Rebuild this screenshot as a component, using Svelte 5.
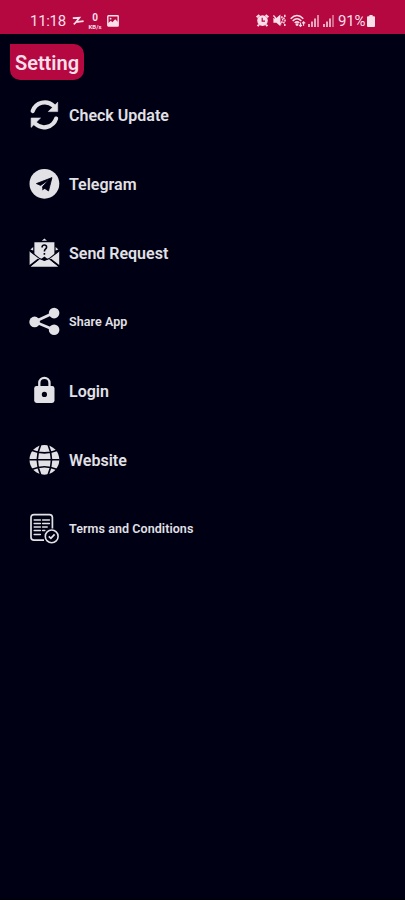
<script>
  const items = [
    { icon: 'refresh', label: 'Check Update' },
    { icon: 'telegram', label: 'Telegram' },
    { icon: 'request', label: 'Send Request' },
    { icon: 'share', label: 'Share App', small: true },
    { icon: 'lock', label: 'Login' },
    { icon: 'globe', label: 'Website' },
    { icon: 'terms', label: 'Terms and Conditions', small: true }
  ];
</script>

<div class="screen">
  <header class="status">
    <div class="left">
      <span class="time">11:18</span>
      <svg class="flash" width="12" height="10" viewBox="0 0 12 10">
        <path d="M.8 2.2 7.4 1.8 4 6.2 11.6 5.2M4.2 6 1.8 8.4" fill="none" stroke="currentColor" stroke-width="1.7" />
      </svg>
      <span class="speed"><b>0</b><i>KB/s</i></span>
      <svg class="photo" width="12" height="12" viewBox="0 0 12 12">
        <rect x=".8" y=".8" width="10.4" height="10.2" rx=".6" fill="none" stroke="currentColor" stroke-width="1.4" />
        <path d="M1 8.2 3.8 5.8 5.4 7.2 8.2 4.2 11 7V11H1Z" fill="currentColor" />
        <circle cx="3.6" cy="3.7" r=".9" fill="currentColor" />
      </svg>
    </div>
    <div class="right">
      <svg class="alarm" width="13" height="13" viewBox="0 0 13 13">
        <circle cx="6.5" cy="6.6" r="5.3" fill="currentColor" />
        <path d="M.6 3.2 3.4.9M12.4 3.2 9.6.9M3 10.6 1.6 12.2M10 10.6 11.4 12.2" stroke="currentColor" stroke-width="2" />
        <path d="M6.2 3.8V7.2H9" fill="none" stroke="#b50841" stroke-width="1.2" />
      </svg>
      <svg class="mute" width="13" height="13" viewBox="0 0 13 13">
        <path d="M.4 4H3.4L7.4.6V12.2L3.4 8.8H.4Z" fill="currentColor" />
        <path d="M0 2.6 1.8 4.6" stroke="#b50841" stroke-width="1" />
        <path d="M.4 1.4 8.2 10.4" stroke="currentColor" stroke-width="1.4" />
        <path d="M8.9 2.2V4.2M9.7 4.8V6.6M8.9 7.2V9M11.8.8V3M10.9 3.4V5M12 5.4V7.4M10.9 7.8V9.6M11.8 10V12" stroke="currentColor" stroke-width="1.5" />
      </svg>
      <svg class="wifi" width="17" height="14" viewBox="0 0 17 14">
        <path d="M.7 4.8Q7-1.6 13.3 4.8M2.7 7Q7 2.6 11.3 7M4.7 9Q7 6.8 9.3 9" fill="none" stroke="currentColor" stroke-width="1.5" />
        <circle cx="7" cy="10.6" r="1.4" fill="currentColor" />
        <path d="M10.5 8.4V12.4M9 10.8 10.5 12.4 12 10.8M13.6 11.8V7.8M12.1 9.4 13.6 7.8 15.2 9.4" fill="none" stroke="currentColor" stroke-width="1.1" />
      </svg>
      {#each [0, 1] as n}
        <svg class="signal" class:second={n === 1} width="11" height="12" viewBox="0 0 11 12">
          <path d="M1 9V12M4 6.5V12M7 3.5V12" stroke="currentColor" stroke-width="1.5" />
          <path d="M10 0V12" stroke="currentColor" stroke-width="1.5" opacity={n ? 0.6 : 0.8} />
        </svg>
      {/each}
      <span class="percent">91%</span>
      <svg class="battery" width="8" height="12" viewBox="0 0 8 12">
        <path d="M2.4 0H5.6V1.2H7Q8 1.2 8 2.2V11Q8 12 7 12H1Q0 12 0 11V2.2Q0 1.2 1 1.2H2.4Z" fill="currentColor" />
      </svg>
    </div>
  </header>

  <main>
    <h1>Setting</h1>
    <ul>
      {#each items as item}
        <li class:small={item.small}>
          <svg class="icon" width="30" height="30" viewBox="-.4 .2 30 30">
            {#if item.icon === 'refresh'}
              {#each [0, 180] as angle}
                <g transform={`rotate(${angle} 15 15)`}>
                  <path d="M3.3 11.2A12.7 12.7 0 0 1 24 6" fill="none" stroke="currentColor" stroke-width="4.2" stroke-linecap="round" />
                  <path d="M28.3 2.4V11.8H18.9Z" fill="currentColor" stroke="currentColor" stroke-width=".6" stroke-linejoin="round" />
                </g>
              {/each}
            {:else if item.icon === 'telegram'}
              <circle cx="15" cy="15" r="14.9" fill="currentColor" />
              <path d="M22.6 8.8 7 14.8 11.2 16.6 20 10.8 13.5 17.4 13.3 18.9 15.7 19.9 19.1 22.2Z" fill="#000014" stroke="#000014" stroke-width=".8" stroke-linejoin="round" />
              <path d="M13 17.6V21.8L15.5 19.6Z" fill="#000014" />
            {:else if item.icon === 'request'}
              <path d="M12.4 3 15 .6 17.6 3ZM5 4.4H25V18.2L19.8 22.4 15 18.6 10.2 22.4 5 18.2Z" fill="currentColor" />
              <path d="M3.8 9.2V12.6L1 11.8ZM26.2 9.2V12.6L29 11.8ZM.2 13.2 9.2 20.2.2 27.2ZM29.8 13.2 20.8 20.2 29.8 27.2ZM1.4 28.8 10.6 21.6 15 24 19.4 21.6 28.6 28.8Z" fill="currentColor" />
              <path d="M10.4 21.2 15 22.6 19.6 21.2 28.8 28.8H1.2Z" fill="currentColor" />
              <path d="M.4 13.2 10.2 20.8 15 22.6 19.8 20.8 29.6 13.2M10.2 20.8.8 28.2M19.8 20.8 29.2 28.2" fill="none" stroke="#000014" stroke-width="1.1" />
              <path d="M12.7 9.6V9Q12.9 7.2 15 7.2T17.2 9.2Q17.2 10.4 16 11.4 15 12.2 15 13.8M15 15.2V17" fill="none" stroke="#000014" stroke-width="1.6" />
            {:else if item.icon === 'share'}
              <path d="M24.6 6 5.2 15 24.6 23" fill="none" stroke="currentColor" stroke-width="2.7" />
              <circle cx="5.2" cy="15.1" r="5.3" fill="currentColor" />
              <circle cx="24.7" cy="6.3" r="5.3" fill="currentColor" />
              <circle cx="24.7" cy="22.9" r="5.3" fill="currentColor" />
            {:else if item.icon === 'lock'}
              <path d="M9.9 11V7.2A5.1 5.1 0 0 1 20.1 7.2V11" fill="none" stroke="currentColor" stroke-width="2.3" />
              <rect x="4.8" y="10.2" width="20.3" height="17" rx="2.4" fill="currentColor" />
              <circle cx="15" cy="18.6" r="2.6" fill="#000014" />
            {:else if item.icon === 'globe'}
              <circle cx="15" cy="15" r="14.9" fill="currentColor" />
              <path d="M-.2 15H30.2M2.2 5.4Q15 10.8 27.8 5.4M2.2 24.6Q15 19.2 27.8 24.6M11.4-.4Q4.4 15 11.4 30.4M18.6-.4Q25.6 15 18.6 30.4" fill="none" stroke="#000014" stroke-width="1.6" />
            {:else}
              <path d="M14.6 26.4H4.6Q1.6 26.4 1.6 23.4V3.8Q1.6.8 4.6.8H20Q23 .8 23 3.8V14.8" fill="none" stroke="currentColor" stroke-width="1.7" />
              <path d="M4.8 6.2H11M13.2 6.2H20M4.8 9.8H11M13.2 9.8H20M4.8 13.2H11M13.2 13.2H17.8M4.8 16.8H11M13.2 16.8H15.4M4.8 20.6H11" stroke="currentColor" stroke-width="1.5" stroke-linecap="round" />
              <circle cx="22.3" cy="22.6" r="6.4" fill="none" stroke="currentColor" stroke-width="1.6" />
              <path d="M19.4 22.6 21.5 24.5 25.2 20.6" fill="none" stroke="currentColor" stroke-width="1.8" />
            {/if}
          </svg>
          <span>{item.label}</span>
        </li>
      {/each}
    </ul>
  </main>
</div>

<style>
  :global(body) { margin: 0; background: #000014; }
  .screen {
    width: 405px;
    height: 900px;
    overflow: hidden;
    box-sizing: border-box;
    background: #000014;
    border-bottom: 1px solid #000;
    font-family: Roboto, sans-serif;
    color: #e2e1e6;
  }
  .status {
    display: flex;
    justify-content: space-between;
    height: 34px;
    padding: 8px 30px 0 30px;
    box-sizing: border-box;
    background: #b50841;
    color: #f9dfe9;
  }
  .left, .right { display: flex; align-items: center; height: 26px; }
  .status svg { flex: none; display: block; }
  .time { width: 36px; font-size: 15px; white-space: nowrap; letter-spacing: -0.3px; }
  .flash { margin-left: 6px; }
  .speed { display: flex; flex-direction: column; align-items: center; width: 14px; margin: 0 5px 0 4px; }
  .speed b { font-size: 10px; line-height: 10px; font-weight: 700; }
  .speed i { font-size: 6px; line-height: 7px; font-style: normal; font-weight: 700; }
  .alarm, .mute { margin-top: -1px; }
  .mute { margin-left: 4px; }
  .wifi { margin-left: 4px; }
  .signal { margin-left: 1px; }
  .signal.second { margin-left: 4px; }
  .percent { width: 28px; margin-left: 4px; font-size: 15px; white-space: nowrap; letter-spacing: -0.2px; }
  .battery { margin-left: 1px; }
  main { padding: 10px 10px 0; }
  h1 {
    width: 74px;
    height: 36px;
    margin: 0;
    border-radius: 0 10px 10px 10px;
    background: #b50841;
    color: #f9dfe9;
    font-size: 20px;
    line-height: 38px;
    font-weight: 600;
    text-align: center;
    white-space: nowrap;
  }
  ul { margin: 0; padding: 0 0 0 19px; list-style: none; }
  li { display: flex; align-items: center; gap: 10px; height: 69px; font-size: 16px; font-weight: 600; white-space: nowrap; }
  li span { padding-top: 1px; }
  .small { font-size: 12.5px; letter-spacing: 0.07px; }
  .small span { padding-top: 0; }
  .icon { flex: none; display: block; overflow: visible; }
</style>
